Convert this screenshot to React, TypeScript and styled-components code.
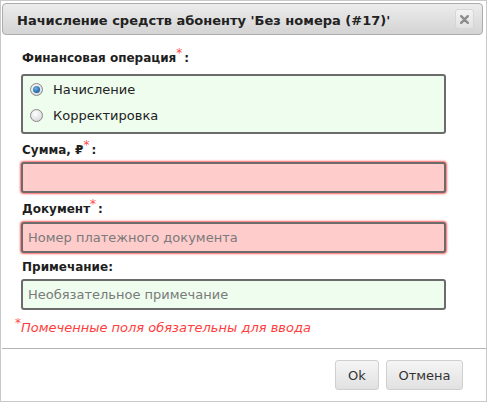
import React from "react";
import styled, { createGlobalStyle } from "styled-components";

const Global = createGlobalStyle`
  html, body { margin: 0; padding: 0; background: #fff; }
  body { font-family: "DejaVu Sans", Verdana, sans-serif; font-size: 13px; color: #222; }
`;

const Dialog = styled.div`
  box-sizing: border-box;
  width: 487px;
  height: 402px;
  border: 1px solid #c9c9c9;
  background: #fff;
  display: flex;
  flex-direction: column;
`;

const TitleBar = styled.div`
  box-sizing: border-box;
  margin: 2px 3px 0 1px;
  height: 32px;
  border: 1px solid #acacac;
  border-radius: 4px;
  background: linear-gradient(#ececec, #d4d4d4);
  display: flex;
  align-items: center;
  justify-content: space-between;
  padding: 0 8px 0 14px;
`;

const Title = styled.div`
  font-weight: bold;
  font-size: 13px;
  color: #222;
  padding-top: 2px;
`;

const CloseButton = styled.button`
  box-sizing: border-box;
  width: 19px;
  height: 20px;
  padding: 0;
  border: 1px solid #d6d6d6;
  border-radius: 3px;
  background: linear-gradient(#f3f3f3, #e2e2e2);
  display: flex;
  align-items: center;
  justify-content: center;
`;

const Form = styled.div`
  padding: 14px 0 0 20px;
  width: 425px;
  display: flex;
  flex-direction: column;
`;

const Label = styled.div<{ $gap: number }>`
  font-weight: bold;
  font-size: 12px;
  line-height: 18px;
  color: #1e1e1e;
  padding-left: 1px;
  margin-bottom: ${(p) => p.$gap}px;
`;

const Star = styled.sup<{ $space?: number }>`
  color: #ff4a4a;
  font-weight: normal;
  font-style: normal;
  font-size: 12px;
  vertical-align: 5px;
  line-height: 0;
  margin-right: ${(p) => p.$space ?? 0}px;
`;

const RadioBox = styled.div`
  box-sizing: border-box;
  height: 60px;
  border: 2px solid #6b6b6b;
  border-radius: 3px;
  background: #eefdee;
  padding: 1px 0 0 7px;
  display: flex;
  flex-direction: column;
  gap: 2px;
  margin-bottom: 7px;
`;

const RadioRow = styled.label`
  display: flex;
  align-items: center;
  height: 24px;
  gap: 10px;
  font-size: 13px;
  color: #222;
`;

const RadioCircle = styled.span<{ $checked?: boolean }>`
  box-sizing: border-box;
  width: 13px;
  height: 13px;
  border-radius: 50%;
  border: 1px solid #8a8a8a;
  background: radial-gradient(circle at 40% 35%, #ffffff, #d8d8d8 80%);
  display: flex;
  align-items: center;
  justify-content: center;
  &::after {
    content: "";
    display: ${(p) => (p.$checked ? "block" : "none")};
    width: 7px;
    height: 7px;
    border-radius: 50%;
    background: radial-gradient(circle at 40% 35%, #6fb3ea, #1a5e9e 75%);
  }
`;

const Input = styled.input<{ $invalid?: boolean; $gap: number }>`
  box-sizing: border-box;
  width: 425px;
  height: 31px;
  border: 2px solid #6b6b6b;
  border-radius: 3px;
  padding: 0 5px;
  font-family: "DejaVu Sans", Verdana, sans-serif;
  font-size: 13px;
  color: #222;
  outline: none;
  background: ${(p) => (p.$invalid ? "#ffcccc" : "#eefdee")};
  box-shadow: ${(p) => (p.$invalid ? "0 0 2px 1px #ff6464" : "none")};
  margin-bottom: ${(p) => p.$gap}px;
  &::placeholder { color: #7a7a7a; }
`;

const Hint = styled.div`
  margin: 9px 0 0 -6px;
  font-style: italic;
  font-size: 13px;
  color: #ff3d3d;
  line-height: 18px;
`;

const Separator = styled.div`
  margin: 11px 0 0 1px;
  height: 1px;
  background: #b4b4b4;
`;

const Footer = styled.div`
  display: flex;
  justify-content: flex-end;
  gap: 7px;
  padding: 11px 23px 0 0;
`;

const Button = styled.button<{ $w: number }>`
  box-sizing: border-box;
  width: ${(p) => p.$w}px;
  height: 30px;
  border: 1px solid #cfcfcf;
  border-radius: 3px;
  background: linear-gradient(#f5f5f5, #e1e1e1);
  font-family: "DejaVu Sans", Verdana, sans-serif;
  font-size: 13px;
  color: #333;
  padding: 0;
`;

export default function App() {
  return (
    <>
      <Global />
      <Dialog>
        <TitleBar>
          <Title>Начисление средств абоненту 'Без номера (#17)'</Title>
          <CloseButton aria-label="close">
            <svg width="9" height="9" viewBox="0 0 9 9">
              <path d="M1.2 1.2 L7.8 7.8 M7.8 1.2 L1.2 7.8" stroke="#8c8c8c" strokeWidth="2.4" strokeLinecap="round" />
            </svg>
          </CloseButton>
        </TitleBar>
        <Form>
          <Label $gap={7}>
            Финансовая операция<Star $space={2}>*</Star>:
          </Label>
          <RadioBox>
            <RadioRow>
              <RadioCircle $checked />
              Начисление
            </RadioRow>
            <RadioRow>
              <RadioCircle />
              Корректировка
            </RadioRow>
          </RadioBox>
          <Label $gap={3}>
            Сумма, ₽<Star $space={2}>*</Star>:
          </Label>
          <Input $invalid $gap={7} />
          <Label $gap={4}>
            Документ<Star $space={2}>*</Star>:
          </Label>
          <Input $invalid $gap={5} placeholder="Номер платежного документа" />
          <Label $gap={3}>Примечание:</Label>
          <Input $gap={0} placeholder="Необязательное примечание" />
          <Hint>
            <Star>*</Star>Помеченные поля обязательны для ввода
          </Hint>
        </Form>
        <Separator />
        <Footer>
          <Button $w={44}>Ok</Button>
          <Button $w={77}>Отмена</Button>
        </Footer>
      </Dialog>
    </>
  );
}
